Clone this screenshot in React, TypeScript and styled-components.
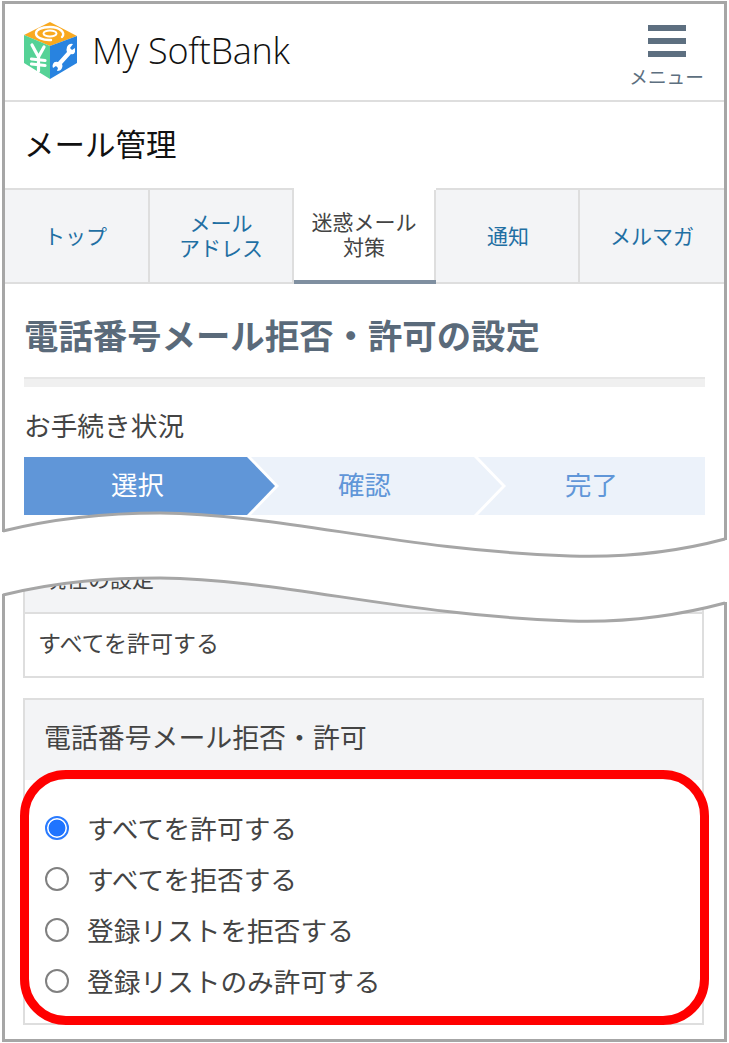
import React from "react";
import styled, { createGlobalStyle } from "styled-components";

const frameColor = "#a6a6a6";
const lineColor = "#dedede";
const softBg = "#f3f4f6";

const Global = createGlobalStyle`
  html, body { margin: 0; padding: 0; background: #fff; }
  body { font-family: "Noto Sans CJK JP", "Noto Sans", sans-serif; color: #444; }
  * { box-sizing: border-box; }
`;

const Page = styled.div`
  position: relative;
  width: 729px;
  height: 1043px;
  padding: 1px 2px 0;
  overflow: hidden;
`;

const TopPane = styled.section`
  position: relative;
  height: 564px;
  border: 3px solid ${frameColor};
  border-bottom: none;
`;

const BottomPane = styled.section`
  position: relative;
  height: 477px;
  padding: 0 20px 0 18px;
  border: 3px solid ${frameColor};
  border-top: none;
`;

const Cut = styled.svg<{ $edge: "top" | "bottom" }>`
  position: absolute;
  left: -5px;
  ${(p) => (p.$edge === "top" ? "top: 0;" : "bottom: 0;")}
  display: block;
`;

const Header = styled.header`
  display: flex;
  align-items: center;
  justify-content: space-between;
  height: 98px;
  padding: 0 20px 2px 19px;
  border-bottom: 2px solid ${lineColor};
`;

const Brand = styled.div`
  display: flex;
  align-items: center;
  gap: 14px;
`;

const BrandName = styled.span`
  font-family: "Open Sans", sans-serif;
  font-size: 36px;
  font-weight: 300;
  letter-spacing: -0.3px;
  color: #111;
  line-height: 1;
`;

const MenuButton = styled.div`
  display: flex;
  flex-direction: column;
  align-items: center;
  gap: 7px;
  padding-top: 10px;
`;

const Burger = styled.div`
  display: flex;
  flex-direction: column;
  gap: 7px;
  width: 38px;
`;

const BurgerBar = styled.span`
  display: block;
  height: 6px;
  background: #5d6f80;
`;

const MenuLabel = styled.span`
  font-size: 18.7px;
  line-height: 24px;
  color: #5d6f80;
`;

const PageTitle = styled.h1`
  display: flex;
  align-items: center;
  height: 86px;
  margin: 0;
  padding: 0 0 5px 19px;
  font-size: 30.5px;
  font-weight: 400;
  color: #111;
`;

const Tabs = styled.nav`
  display: flex;
  height: 96px;
`;

const Tab = styled.div<{ $active?: boolean; $width: number }>`
  flex: 0 0 ${(p) => p.$width}px;
  display: flex;
  align-items: center;
  justify-content: center;
  padding-bottom: 2px;
  text-align: center;
  font-size: 21px;
  line-height: 25px;
  white-space: pre-line;
  color: ${(p) => (p.$active ? "#444" : "#1f6fa3")};
  background: ${(p) => (p.$active ? "#fff" : softBg)};
  border-top: 2px solid ${(p) => (p.$active ? "#fff" : lineColor)};
  border-bottom: ${(p) => (p.$active ? "4px solid #7f8fa0" : `2px solid ${lineColor}`)};
  box-shadow: inset -2px 0 0 ${lineColor};
  &:nth-child(-n + 3) { padding-right: 2px; }
  &:first-child { padding-right: 4px; }
  &:last-child { box-shadow: none; }
`;

const Content = styled.div`
  padding: 0 19px;
`;

const Heading = styled.h2`
  display: flex;
  align-items: center;
  height: 93px;
  margin: 0;
  padding-top: 6px;
  font-size: 34.4px;
  font-weight: 700;
  white-space: nowrap;
  color: #5a6a7a;
`;

const HeadingRule = styled.div`
  height: 10px;
  background: #f0f0f0;
  border-top: 2px solid #e6e6e6;
`;

const ProgressLabel = styled.div`
  display: flex;
  align-items: center;
  height: 70px;
  padding-top: 4px;
  font-size: 26.7px;
  color: #444;
`;

const Steps = styled.ol`
  display: grid;
  grid-template-columns: repeat(3, 1fr);
  height: 58px;
  margin: 0;
  padding: 0;
  list-style: none;
  background: #ecf2fa;
`;

const Step = styled.li<{ $active?: boolean; $last?: boolean }>`
  position: relative;
  display: flex;
  align-items: center;
  justify-content: center;
  padding-bottom: 5px;
  font-size: 26.4px;
  color: ${(p) => (p.$active ? "#fff" : "#6096d8")};
  background: ${(p) => (p.$active ? "linear-gradient(to right, #6096d8 calc(100% - 4px), transparent 0)" : "transparent")};
  &::before, &::after {
    content: "";
    display: ${(p) => (p.$last ? "none" : "block")};
    position: absolute;
    top: 0;
    bottom: 0;
    left: calc(100% - 4px);
    z-index: 1;
  }
  &::before {
    width: 32px;
    background: #fff;
    clip-path: polygon(0 0, 4px 0, 32px 50%, 4px 100%, 0 100%);
  }
  &::after {
    width: 28px;
    background: ${(p) => (p.$active ? "#6096d8" : "#ecf2fa")};
    clip-path: polygon(0 0, 28px 50%, 0 100%);
  }
`;

const Panel = styled.div<{ $clipped?: boolean }>`
  border: 2px solid ${lineColor};
  ${(p) => (p.$clipped ? "border-top: none;" : "")}
`;

const CurrentHeader = styled.div`
  display: flex;
  align-items: flex-end;
  height: 49px;
  padding: 0 0 22px 19px;
  font-size: 22px;
  line-height: 26px;
  color: #444;
  background: ${softBg};
  border-bottom: 2px solid ${lineColor};
`;

const CurrentValue = styled.div`
  display: flex;
  align-items: center;
  height: 62px;
  padding: 0 0 6px 13px;
  font-size: 23px;
  color: #444;
`;

const ChoicePanel = styled(Panel)`
  height: 327px;
  margin-top: 20px;
`;

const ChoiceHeader = styled.div`
  display: flex;
  align-items: center;
  height: 80px;
  padding: 0 0 8px 19px;
  font-size: 26.9px;
  color: #444;
  background: ${softBg};
`;

const Choices = styled.div`
  display: flex;
  flex-direction: column;
  padding: 22px 0 0 20px;
`;

const Choice = styled.label`
  display: flex;
  align-items: center;
  gap: 18px;
  height: 51px;
  font-size: 26.7px;
  color: #444;
`;

const Radio = styled.input.attrs({ type: "radio" })`
  appearance: none;
  width: 24px;
  height: 24px;
  margin: 0;
  border: 2px solid #808080;
  border-radius: 50%;
  background: #fff;
  &:checked {
    border-color: #2a7bff;
    background: radial-gradient(circle, #1f74ff 0 8px, #fff 8.8px);
  }
`;

const Highlight = styled.div`
  position: absolute;
  left: 20px;
  top: 770px;
  width: 689px;
  height: 255px;
  border: 9.5px solid #ff0000;
  border-radius: 46px;
  pointer-events: none;
`;

const Logo = () => (
  <svg width="54" height="58" viewBox="24 23 54 58">
    <polygon points="50,23 77,37 50,47 24,36" fill="#f9a91f" />
    <polygon points="24,36 50,47 50,80 24,64" fill="#55d296" />
    <polygon points="50,47 77,37 77,64 50,80" fill="#2883e0" />
    <g fill="none" stroke="#fff" strokeLinecap="round">
      <path d="M62 38 C66 34 60 28 50 28 C41 28 36 31 36 34.5 C36 38.5 43 41.5 51 41" strokeWidth="2.4" />
      <ellipse cx="50" cy="34.5" rx="6.5" ry="3" strokeWidth="2" />
      <path d="M32 46 L38.5 58 L44 48 M38.5 58 L38.5 72 M31.5 60 L45 61.5 M31.5 65 L45 66.5" strokeWidth="3.2" />
    </g>
    <path
      d="M73 45 q-4 -1 -6 3 q-1 3 0 5 l-9 10 q-4 -1 -5 2 q-1 2 0 4 l3 -2 l2 2 l-1 3 q4 0 5 -3 q1 -2 0 -4 l9 -10 q3 1 4 -2 l0 -4 l-3 2 l-2 -2 z"
      fill="#fff"
    />
  </svg>
);

const tabs = [
  { label: "トップ", width: 145 },
  { label: "メール\nアドレス", width: 144 },
  { label: "迷惑メール\n対策", width: 142, active: true },
  { label: "通知", width: 144 },
  { label: "メルマガ", width: 144 },
];

const steps = ["選択", "確認", "完了"];

const options = [
  "すべてを許可する",
  "すべてを拒否する",
  "登録リストを拒否する",
  "登録リストのみ許可する",
];

const topWave = "C60 517 110 513 160 513 C280 514 400 550 570 556 C630 558 680 551 725 539";
const bottomWave = "C60 581 110 578 160 578 C280 579 400 615 570 621 C630 623 680 615 725 603";

export default function App() {
  return (
    <Page lang="ja">
      <Global />
      <TopPane>
        <Header>
          <Brand>
            <Logo />
            <BrandName>My SoftBank</BrandName>
          </Brand>
          <MenuButton>
            <Burger>
              <BurgerBar />
              <BurgerBar />
              <BurgerBar />
            </Burger>
            <MenuLabel>メニュー</MenuLabel>
          </MenuButton>
        </Header>
        <PageTitle>メール管理</PageTitle>
        <Tabs>
          {tabs.map((t) => (
            <Tab key={t.label} $active={t.active} $width={t.width}>{t.label}</Tab>
          ))}
        </Tabs>
        <Content>
          <Heading>電話番号メール拒否・許可の設定</Heading>
          <HeadingRule />
          <ProgressLabel>お手続き状況</ProgressLabel>
          <Steps>
            {steps.map((s, i) => (
              <Step key={s} $active={i === 0} $last={i === steps.length - 1}>{s}</Step>
            ))}
          </Steps>
        </Content>
        <Cut $edge="bottom" width="729" height="60" viewBox="0 505 729 60">
          <path d={`M3 531 ${topWave} L729 539 L729 565 L0 565 L0 531 Z`} fill="#fff" />
          <path d={`M3 531 ${topWave}`} fill="none" stroke={frameColor} strokeWidth="3" />
          <path d="M3.5 505 V532 M725.5 505 V540" fill="none" stroke={frameColor} strokeWidth="3" />
        </Cut>
      </TopPane>
      <BottomPane>
        <Panel $clipped>
          <CurrentHeader>現在の設定</CurrentHeader>
          <CurrentValue>すべてを許可する</CurrentValue>
        </Panel>
        <ChoicePanel>
          <ChoiceHeader>電話番号メール拒否・許可</ChoiceHeader>
          <Choices>
            {options.map((o, i) => (
              <Choice key={o}>
                <Radio name="mail" defaultChecked={i === 0} />
                {o}
              </Choice>
            ))}
          </Choices>
        </ChoicePanel>
        <Cut $edge="top" width="729" height="60" viewBox="0 565 729 60">
          <path d={`M3 595 ${bottomWave} L729 603 L729 565 L0 565 L0 595 Z`} fill="#fff" />
          <path d={`M3 595 ${bottomWave}`} fill="none" stroke={frameColor} strokeWidth="3" />
          <path d="M3.5 625 V594 M725.5 625 V602" fill="none" stroke={frameColor} strokeWidth="3" />
        </Cut>
      </BottomPane>
      <Highlight />
    </Page>
  );
}
